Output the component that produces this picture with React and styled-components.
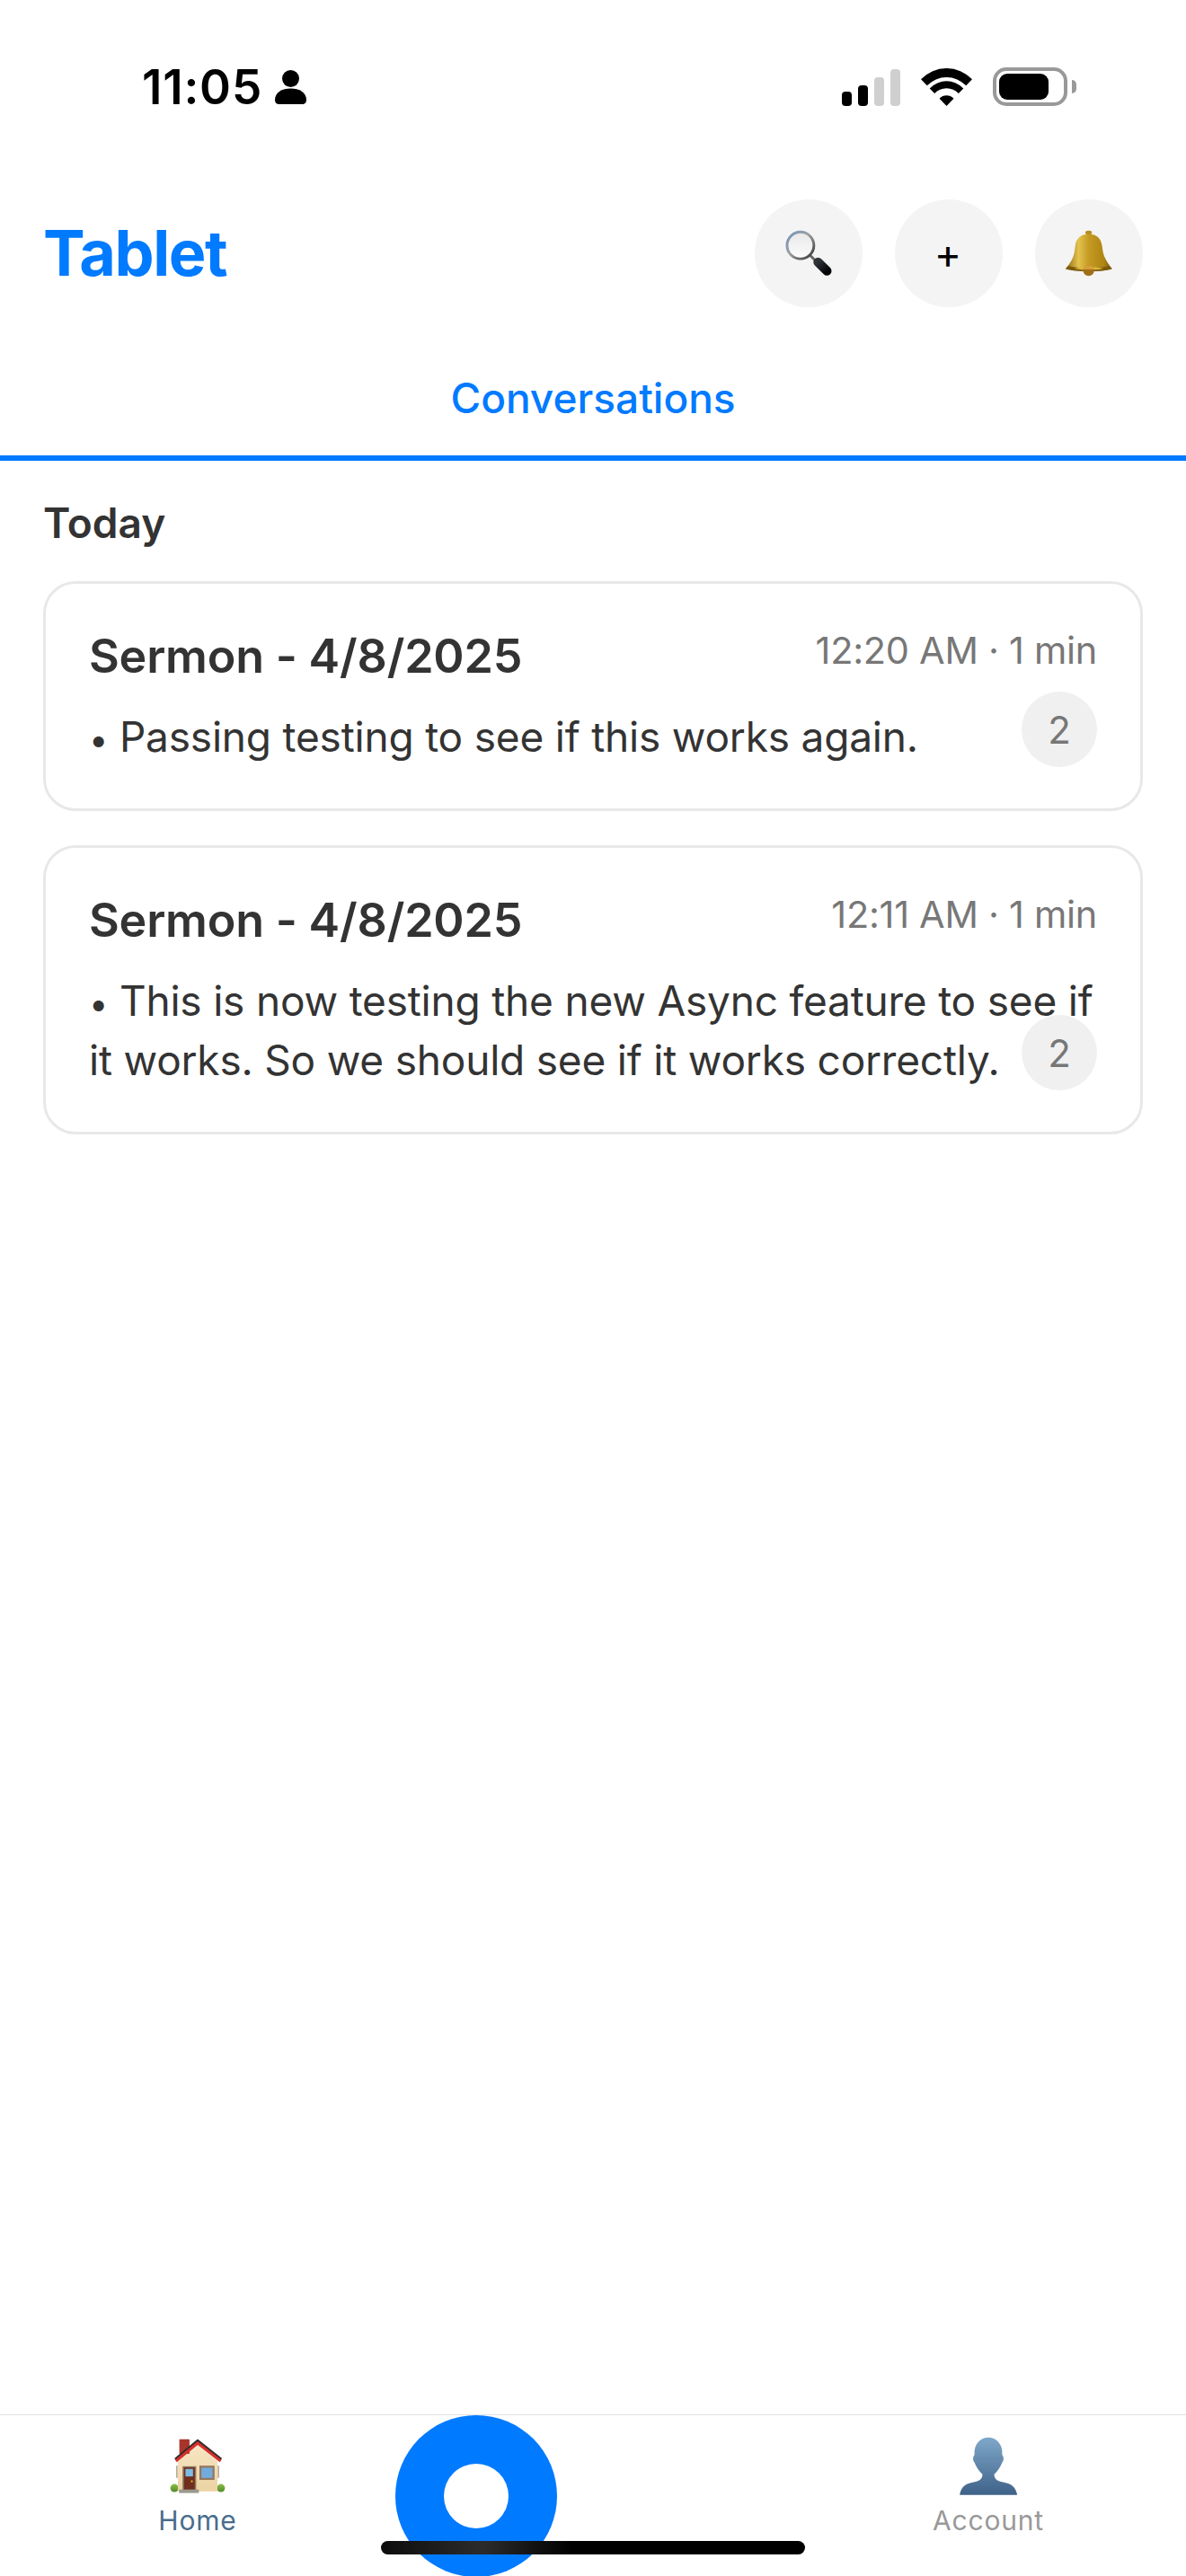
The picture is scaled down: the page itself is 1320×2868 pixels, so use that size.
import React from "react";
import styled, { createGlobalStyle } from "styled-components";

const Global = createGlobalStyle`
  html, body { margin: 0; padding: 0; background: #fff; }
  * { box-sizing: border-box; }
  body { font-family: Inter, "Liberation Sans", sans-serif; -webkit-font-smoothing: antialiased; }
`;

const Page = styled.div`
  width: 1320px; height: 2868px; background: #fff; display: flex; flex-direction: column;
  overflow: hidden; position: relative;
`;

const StatusBar = styled.div`
  height: 172px; padding: 75px 122px 0 158px; display: flex; justify-content: space-between; align-items: flex-start;
`;
const StatusLeft = styled.div`display: flex; align-items: center; gap: 14px; height: 44px;`;
const Clock = styled.span`
  font-size: 53px; font-weight: 600; line-height: 44px; color: #000; letter-spacing: 0.8px;
`;
const StatusRight = styled.div`display: flex; align-items: flex-end; height: 43px;`;
const Signal = styled.div`display: flex; align-items: flex-end; gap: 7px; margin-right: 23px;`;
const SignalBar = styled.div`
  width: 11px; height: ${p => p.$h}px; border-radius: 4px; background: ${p => (p.$on ? "#000" : "#cfcfcf")};
`;
const WifiIcon = styled.svg`width: 57px; height: 42px; margin-right: 23px; display: block;`;
const Battery = styled.div`
  position: relative; width: 83px; height: 43px; border: 4px solid #999; border-radius: 15px; padding: 3px;
  margin-right: 10px;
`;
const BatteryFill = styled.div`width: 55px; height: 29px; background: #000; border-radius: 9px;`;
const BatteryNub = styled.div`
  position: absolute; right: -14px; top: 10px; width: 5px; height: 15px; background: #999;
  border-radius: 0 5px 5px 0;
`;

const Header = styled.header`
  height: 170px; padding: 50px 48px 0; display: flex; justify-content: space-between; align-items: flex-start;
`;
const Title = styled.h1`
  margin: 0; font-size: 70px; line-height: 120px; font-weight: 700; color: #007aff; letter-spacing: -1.4px;
`;
const Actions = styled.div`display: flex; gap: 36px;`;
const RoundButton = styled.button`
  width: 120px; height: 120px; border-radius: 50%; border: 0; padding: 0; background: #f4f4f4;
  display: flex; align-items: center; justify-content: center; font-family: inherit; color: #000;
  font-size: 46px; line-height: 1;
`;
const PlusText = styled.span`position: relative; left: -1px;`;

const Tabs = styled.nav`
  height: 171px; padding-top: 72px; border-bottom: 6px solid #007aff; text-align: center;
`;
const TabLabel = styled.span`
  display: block; font-size: 46px; line-height: 58px; font-weight: 500; color: #007aff;
`;

const Main = styled.main`flex: 1; padding: 41px 48px 0; display: flex; flex-direction: column;`;
const SectionTitle = styled.h2`
  margin: 0 0 37px; font-size: 46px; line-height: 56px; font-weight: 600; color: #333;
`;
const CardList = styled.div`display: flex; flex-direction: column; gap: 38px;`;
const Card = styled.article`
  position: relative; border: 3px solid #e8e8e8; border-radius: 36px; padding: 49px 48px 47px; background: #fff;
`;
const CardTop = styled.div`display: flex; justify-content: space-between; align-items: flex-start; margin-bottom: 24px;`;
const CardTitle = styled.h3`
  margin: 0; font-size: 52px; line-height: 64px; font-weight: 600; color: #333; letter-spacing: -0.2px;
`;
const CardMeta = styled.span`
  margin-top: -1px; font-size: 41.5px; line-height: 52px; color: #777; font-weight: 400; letter-spacing: -0.3px;
`;
const CardText = styled.p`
  margin: 0; font-size: 46px; line-height: 66px; color: #333; font-weight: 400; letter-spacing: -0.2px;
`;
const Bullet = styled.span`font-size: 38px; line-height: 0;`;
const Badge = styled.span`
  position: absolute; right: 48px; bottom: 46px; width: 84px; height: 84px; border-radius: 50%;
  background: #f0f0f0; color: #777; font-size: 42px; display: flex; align-items: center; justify-content: center;
`;

const BottomNav = styled.footer`
  position: relative; height: 180px; border-top: 1px solid #e2e2e2; padding-top: 24px;
  display: grid; grid-template-columns: repeat(3, 1fr); background: #fff;
`;
const NavItem = styled.div`display: flex; flex-direction: column; align-items: center; grid-column: ${p => p.$col};`;
const NavIcon = styled.svg`width: 66px; height: 65px; display: block;`;
const NavLabel = styled.span`
  margin-top: 10px; font-size: 30px; line-height: 36px; letter-spacing: 0.8px; color: ${p => p.$c};
`;
const Fab = styled.div`
  position: absolute; left: 440px; top: 0; width: 180px; height: 180px; border-radius: 50%;
  background: #007aff; display: flex; align-items: center; justify-content: center;
`;
const FabDot = styled.div`width: 72px; height: 72px; border-radius: 50%; background: #fff;`;
const HomeIndicator = styled.div`
  position: absolute; left: 424px; bottom: 24px; width: 472px; height: 15px; border-radius: 8px;
  background: linear-gradient(90deg, #0c0c0c 0%, #2c2c2c 24%, #000 45%, #000 100%);
`;

const EmojiSearch = () => (
  <svg width="53" height="52" viewBox="40 45 160 157">
    <defs>
      <linearGradient id="ring" x1="0" y1="0" x2="1" y2="1">
        <stop offset="0" stopColor="#6f93bd" />
        <stop offset=".45" stopColor="#a0a0a0" />
        <stop offset="1" stopColor="#333" />
      </linearGradient>
      <linearGradient id="glass" x1="0" y1="0" x2="0" y2="1">
        <stop offset="0" stopColor="#e8e8e8" />
        <stop offset=".7" stopColor="#f6f6f6" />
        <stop offset="1" stopColor="#fff" />
      </linearGradient>
      <linearGradient id="grip" x1="0" y1="0" x2="1" y2="1">
        <stop offset="0" stopColor="#2e3338" />
        <stop offset="1" stopColor="#050608" />
      </linearGradient>
    </defs>
    <line x1="124" y1="131" x2="146" y2="153" stroke="#666" strokeWidth="9" />
    <line x1="150" y1="153" x2="180" y2="183" stroke="url(#grip)" strokeWidth="31" strokeLinecap="round" />
    <circle cx="91" cy="97" r="45" fill="url(#glass)" stroke="url(#ring)" strokeWidth="9" />
  </svg>
);

const EmojiBell = () => (
  <svg width="54" height="52" viewBox="30 30 162 156">
    <defs>
      <linearGradient id="gold" x1="0" y1="0" x2="1" y2="0">
        <stop offset="0" stopColor="#8f6a10" />
        <stop offset=".28" stopColor="#e3c24e" />
        <stop offset=".5" stopColor="#c49a22" />
        <stop offset=".82" stopColor="#b08614" />
        <stop offset="1" stopColor="#76560a" />
      </linearGradient>
    </defs>
    <ellipse cx="110" cy="39" rx="11" ry="7" fill="#b48d20" />
    <path d="M33 160 C58 130 62 115 65 85 C68 58 82 44 110 44 C138 44 152 58 155 85 C158 115 165 130 188 160 C165 170 60 170 33 160Z" fill="url(#gold)" />
    <path d="M33 160 C60 172 160 172 188 160 C184 155 181 152 178 150 C150 160 70 160 43 150 C40 152 37 155 33 160Z" fill="#7d5b0c" />
    <path d="M62 159 C90 152 130 152 160 159 C130 165 90 165 62 159Z" fill="#d9b43e" />
    <circle cx="110" cy="166" r="18" fill="#a06e18" />
    <path d="M92 162 A18 14 0 0 1 128 162 Z" fill="#d69e36" />
  </svg>
);

const EmojiHouse = () => (
  <NavIcon viewBox="48 40 204 198">
    <defs>
      <linearGradient id="wall" x1="0" y1="0" x2="0" y2="1">
        <stop offset="0" stopColor="#f7e6c4" />
        <stop offset="1" stopColor="#ecd3a4" />
      </linearGradient>
      <linearGradient id="bush" x1="0" y1="0" x2="0" y2="1">
        <stop offset="0" stopColor="#8cbf4a" />
        <stop offset="1" stopColor="#4f8a28" />
      </linearGradient>
    </defs>
    <circle cx="70" cy="215" r="14" fill="url(#bush)" />
    <circle cx="230" cy="215" r="14" fill="url(#bush)" />
    <rect x="76" y="138" width="5" height="42" fill="#b5a795" />
    <rect x="219" y="138" width="5" height="42" fill="#b5a795" />
    <path d="M82 122 L150 66 L218 122 L218 226 L82 226Z" fill="url(#wall)" />
    <rect x="87" y="47" width="35" height="50" rx="2" fill="#a8352c" />
    <path d="M73 116 L150 52 L231 116" fill="none" stroke="#2e2a2a" strokeWidth="9" strokeLinejoin="round" />
    <path d="M75 122 L150 60 L229 122" fill="none" stroke="#d4302c" strokeWidth="10" strokeLinejoin="round" />
    <rect x="98" y="140" width="47" height="81" fill="#8d7660" />
    <rect x="103" y="144" width="37" height="77" fill="#6f2f1c" />
    <rect x="108" y="149" width="26" height="26" fill="#7dbbe4" />
    <circle cx="130" cy="192" r="3.5" fill="#f2b524" />
    <rect x="156" y="138" width="52" height="49" fill="#94785c" />
    <rect x="163" y="145" width="38" height="35" fill="#72acdf" />
    <rect x="86" y="220" width="68" height="12" fill="#9a9a8e" />
  </NavIcon>
);

const EmojiBust = () => (
  <NavIcon viewBox="50 38 200 198">
    <defs>
      <linearGradient id="bust" x1="0" y1="0" x2="0" y2="1">
        <stop offset="0" stopColor="#7ea8ca" />
        <stop offset="1" stopColor="#3f6288" />
      </linearGradient>
    </defs>
    <path d="M53 235 C58 205 75 197 100 192 C122 188 130 180 130 165 C118 155 108 138 103 125 C97 120 97 105 103 100 C100 60 125 40 150 40 C175 40 200 60 197 100 C203 105 203 120 197 125 C192 138 182 155 170 165 C170 180 178 188 200 192 C225 197 242 205 248 235 Z" fill="url(#bust)" />
  </NavIcon>
);

const cards = [
  { time: "12:20 AM · 1 min", text: " Passing testing to see if this works again." },
  { time: "12:11 AM · 1 min", text: " This is now testing the new Async feature to see if it works. So we should see if it works correctly." },
];

export default function App() {
  return (
    <Page>
      <Global />
      <StatusBar>
        <StatusLeft>
          <Clock>11:05</Clock>
          <svg width="35" height="38" viewBox="0 0 35 38">
            <circle cx="17.5" cy="9.5" r="9.5" fill="#000" />
            <path d="M0 33 C0 25 8 20.5 17.5 20.5 C27 20.5 35 25 35 33 C35 36 33.500 38 30 38 L5 38 C1.500 38 0 36 0 33Z" fill="#000" />
          </svg>
        </StatusLeft>
        <StatusRight>
          <Signal>
            <SignalBar $h={16} $on />
            <SignalBar $h={23} $on />
            <SignalBar $h={32} />
            <SignalBar $h={41} />
          </Signal>
          <WifiIcon viewBox="-1.2 0 59.4 42" preserveAspectRatio="none">
            <path fill="#000" d="M-1.2 12.3 A42 42 0 0 1 58.2 12.3 L51.13 19.37 A32 32 0 0 0 5.87 19.37 Z" />
            <path fill="#000" d="M8.91 22.41 A27.7 27.7 0 0 1 48.09 22.41 L42.43 28.07 A19.7 19.7 0 0 0 14.57 28.07 Z" />
            <path fill="#000" d="M20.23 33.73 A11.7 11.7 0 0 1 36.77 33.73 L28.5 42 Z" />
          </WifiIcon>
          <Battery>
            <BatteryFill />
            <BatteryNub />
          </Battery>
        </StatusRight>
      </StatusBar>

      <Header>
        <Title>Tablet</Title>
        <Actions>
          <RoundButton><EmojiSearch /></RoundButton>
          <RoundButton><PlusText>+</PlusText></RoundButton>
          <RoundButton><EmojiBell /></RoundButton>
        </Actions>
      </Header>

      <Tabs><TabLabel>Conversations</TabLabel></Tabs>

      <Main>
        <SectionTitle>Today</SectionTitle>
        <CardList>
          {cards.map(c => (
            <Card key={c.time}>
              <CardTop>
                <CardTitle>Sermon - 4/8/2025</CardTitle>
                <CardMeta>{c.time}</CardMeta>
              </CardTop>
              <CardText><Bullet>•</Bullet>{c.text}</CardText>
              <Badge>2</Badge>
            </Card>
          ))}
        </CardList>
      </Main>

      <BottomNav>
        <NavItem $col={1}><EmojiHouse /><NavLabel $c="#4a6d8c">Home</NavLabel></NavItem>
        <NavItem $col={3}><EmojiBust /><NavLabel $c="#999">Account</NavLabel></NavItem>
        <Fab><FabDot /></Fab>
        <HomeIndicator />
      </BottomNav>
    </Page>
  );
}
